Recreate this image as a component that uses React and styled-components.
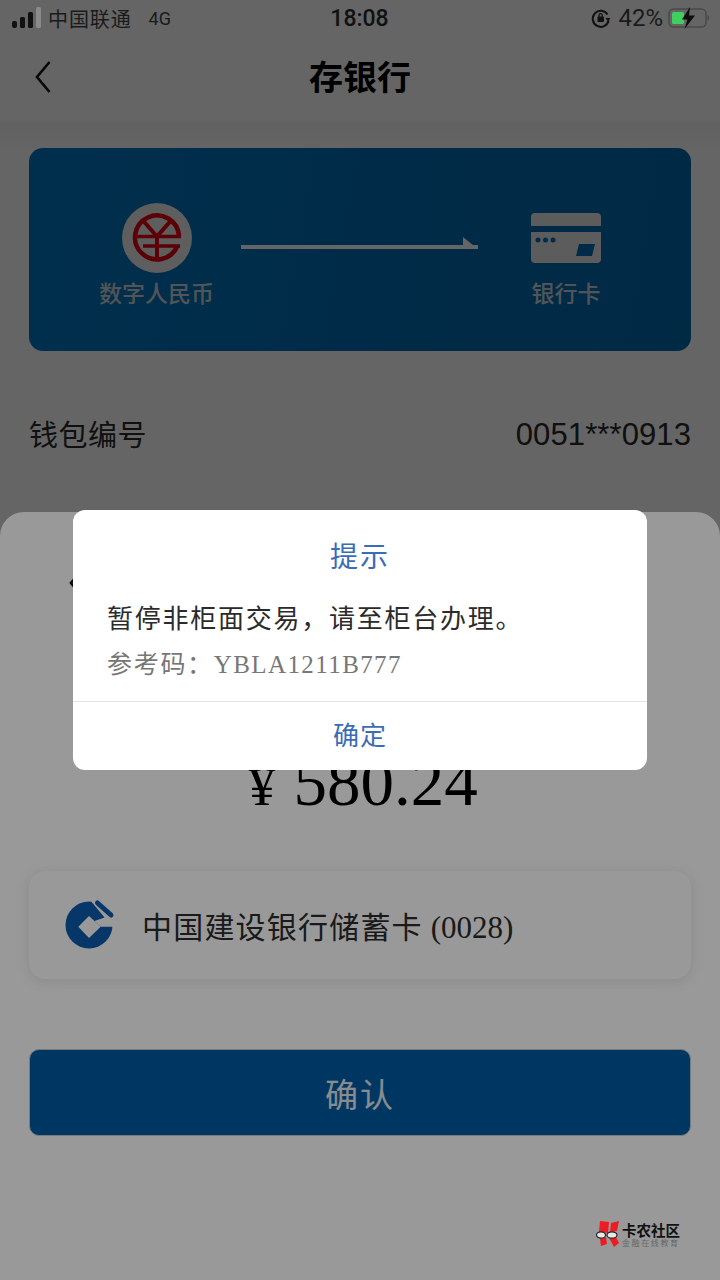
import styled, { createGlobalStyle } from "styled-components";

const cjk = `"Noto Sans CJK SC", "Noto Sans", sans-serif`;
const serif = `"Liberation Serif", "Noto Sans CJK SC", serif`;

const GlobalStyle = createGlobalStyle`
  html, body {
    margin: 0;
    padding: 0;
    background: #fff;
  }
  * {
    box-sizing: border-box;
  }
`;

const Screen = styled.div`
  position: relative;
  width: 720px;
  height: 1280px;
  overflow: hidden;
  background: #fff;
  font-family: ${cjk};
`;

const Page = styled.div`
  display: flex;
  flex-direction: column;
  height: 100%;
  padding-top: 36px;
  background: linear-gradient(#fff 0, #fff 120px, #f7f7f7 124px, #fff 150px);
`;

const StatusBar = styled.div`
  position: absolute;
  top: 0;
  left: 0;
  right: 0;
  display: flex;
  align-items: center;
  justify-content: space-between;
  height: 36px;
  padding: 0 10px 0 12px;
  font-family: "Roboto", ${cjk};
  font-size: 22px;
  color: #1a1a1a;
`;

const StatusSide = styled.div`
  display: flex;
  align-items: center;
  gap: ${(p) => p.$gap || 6}px;
  width: ${(p) => (p.$right ? 273 : 270)}px;
  justify-content: ${(p) => (p.$right ? "flex-end" : "flex-start")};
`;

const Carrier = styled.span`
  margin-right: 11px;
  font-family: ${cjk};
  font-size: 20px;
  letter-spacing: 0.9px;
`;

const NetworkType = styled.span`
  font-size: 18px;
`;

const Clock = styled.span`
  font-size: 23px;
  font-weight: 500;
  color: #111;
`;

const Battery = styled.span`
  font-size: 24px;
  margin-left: 2px;
`;

const NavBar = styled.div`
  position: relative;
  display: flex;
  align-items: center;
  justify-content: center;
  height: 84px;
  margin-bottom: 28px;
`;

const BackButton = styled.div`
  position: absolute;
  left: 34px;
  top: 24px;
  line-height: 0;
`;

const Title = styled.h1`
  margin: 0 0 6px;
  font-size: 34px;
  font-weight: 700;
  color: #000;
`;

const Banner = styled.div`
  display: flex;
  align-items: flex-start;
  justify-content: space-between;
  height: 203px;
  margin: 0 29px;
  padding: 55px 90px 0 70px;
  border-radius: 14px;
  background: linear-gradient(100deg, #0078c4 0%, #006fb6 55%, #0069ae 100%);
`;

const BannerItem = styled.div`
  display: flex;
  flex-direction: column;
  align-items: center;
  gap: 1px;
`;

const IconSlot = styled.div`
  display: flex;
  align-items: center;
  height: 70px;
`;

const BannerLabel = styled.span`
  font-size: 23px;
  line-height: 36px;
  font-weight: 500;
  white-space: nowrap;
  color: #cfd8df;
`;

const TransferArrow = styled.div`
  position: relative;
  flex: 1;
  height: 4px;
  margin: 42px 53px 0 27px;
  background: #fff;

  &::after {
    content: "";
    position: absolute;
    right: 0;
    bottom: 0;
    border-left: 15px solid #fff;
    border-top: 12px solid transparent;
  }
`;

const InfoRow = styled.div`
  display: flex;
  align-items: flex-start;
  justify-content: space-between;
  margin: 62px 29px 0;
  font-size: 29px;
  line-height: 40px;
  letter-spacing: 0.5px;
  color: #2a2a2a;
`;

const WalletNumber = styled.span`
  padding-top: 2px;
  font-family: "Liberation Sans", sans-serif;
  font-size: 31px;
  letter-spacing: 0.1px;
`;

const Scrim = styled.div`
  position: absolute;
  inset: 0;
  background: rgba(0, 0, 0, ${(p) => p.$alpha});
`;

const Sheet = styled.div`
  position: absolute;
  left: 0;
  right: 0;
  top: 512px;
  bottom: 0;
  display: flex;
  flex-direction: column;
  padding: 0 29px;
  border-radius: 24px 24px 0 0;
  background: #fff;
`;

const SheetHeader = styled.div`
  height: 100px;
  padding: 54px 0 0 39px;
  line-height: 0;
`;

const Amount = styled.div`
  margin-top: 132px;
  padding-left: 6px;
  font-family: ${serif};
  font-size: 67px;
  line-height: 76px;
  text-align: center;
  color: #000;
`;

const Yen = styled.span`
  margin-right: 18px;
  font-size: 54px;
`;

const BankCard = styled.div`
  display: flex;
  align-items: center;
  gap: 29px;
  height: 108px;
  margin-top: 46px;
  padding-left: 36px;
  border-radius: 16px;
  background: #fff;
  box-shadow: 0 2px 14px rgba(0, 0, 0, 0.1);
`;

const BankName = styled.span`
  font-size: 30px;
  letter-spacing: 1.2px;
  color: #2c2c2c;
`;

const CardTail = styled.span`
  font-family: ${serif};
  font-size: 31px;
  letter-spacing: 0;
`;

const ConfirmButton = styled.div`
  display: flex;
  align-items: center;
  justify-content: center;
  height: 87px;
  margin-top: 70px;
  border: 1px solid #c4ccd4;
  border-radius: 10px;
  background: #005da3;
  font-size: 33px;
  letter-spacing: 2px;
  color: #e4e9ee;
`;

const Watermark = styled.div`
  position: absolute;
  right: 40px;
  bottom: 33px;
  display: flex;
  align-items: center;
  gap: 1px;
`;

const WatermarkText = styled.div`
  display: flex;
  flex-direction: column;
`;

const WatermarkName = styled.span`
  font-size: 14.5px;
  line-height: 17px;
  font-weight: 700;
  letter-spacing: 0;
  color: #111;
`;

const WatermarkSub = styled.span`
  font-size: 8px;
  line-height: 9px;
  letter-spacing: 1.6px;
  color: #666;
`;

const Dialog = styled.div`
  position: absolute;
  left: 73px;
  top: 510px;
  display: flex;
  flex-direction: column;
  width: 574px;
  height: 260px;
  border-radius: 12px;
  background: #fff;
`;

const DialogTitle = styled.div`
  margin-top: 25px;
  font-size: 28px;
  line-height: 40px;
  text-align: center;
  letter-spacing: 2px;
  color: #3b6cb7;
`;

const DialogBody = styled.div`
  flex: 1;
  padding: 20px 34px 0;
`;

const Message = styled.div`
  font-size: 26px;
  line-height: 44px;
  letter-spacing: 1.75px;
  white-space: nowrap;
  color: #2b2b2b;
`;

const RefCode = styled.div`
  font-size: 25px;
  line-height: 46px;
  letter-spacing: 1.7px;
  white-space: nowrap;
  color: #777;
`;

const RefValue = styled.span`
  font-family: ${serif};
  letter-spacing: 1.4px;
`;

const DialogAction = styled.div`
  height: 69px;
  border-top: 1px solid #e4e4e4;
  font-size: 26px;
  line-height: 64px;
  text-align: center;
  letter-spacing: 1px;
  color: #3b6cb7;
`;

const SignalIcon = () => (
  <svg width="30" height="24" viewBox="0 0 30 24">
    <rect x="0" y="15" width="5" height="7" rx="2" fill="#111" />
    <rect x="8" y="11" width="5" height="11" rx="1.5" fill="#111" />
    <rect x="16" y="6" width="5" height="16" rx="1.5" fill="#111" />
    <rect x="24" y="1" width="5" height="21" rx="1.5" fill="#8a8a8a" />
  </svg>
);

const RotationLockIcon = () => (
  <svg width="20" height="20" viewBox="0 0 20 20">
    <path d="M16.5 6.5A8 8 0 1 0 17.6 12.5" fill="none" stroke="#111" strokeWidth="2" />
    <path d="M14.5 10h5l-2.500 3.400z" fill="#111" />
    <rect x="6.500" y="8.500" width="6.500" height="5.500" rx="1" fill="#111" />
    <path d="M8 9V7.200a1.600 1.600 0 0 1 3.200 0V9" fill="none" stroke="#111" strokeWidth="1.300" />
  </svg>
);

const BatteryIcon = () => (
  <svg width="42" height="22" viewBox="0 0 42 22">
    <rect x="1" y="2" width="37" height="18" rx="4.500" fill="none" stroke="#4a4a4a" strokeWidth="1.500" />
    <rect x="4" y="5" width="12" height="12" rx="1.500" fill="#3fce5f" />
    <path d="M39.500 8c2 .6 2 5.400 0 6z" fill="#4a4a4a" />
    <path d="M22 0 14 12.500h5.500L16.500 22 27 8.500h-6z" fill="#0c0c0c" />
  </svg>
);

const ChevronLeft = () => (
  <svg width="18" height="34" viewBox="0 0 18 34">
    <path d="M15.500 2 3 17l12.500 15" fill="none" stroke="#111" strokeWidth="2.600" />
  </svg>
);

const DigitalRmbIcon = () => (
  <svg width="70" height="70" viewBox="0 0 70 70">
    <circle cx="35" cy="35" r="35" fill="#eeeeee" />
    <g fill="none" stroke="#e60012">
      <path d="M57 33A22 22 0 1 0 55.300 43" strokeWidth="4.500" />
      <path d="M21 17.500 35 33.500l14-16" strokeWidth="4" />
      <path d="M35 33.500V56" strokeWidth="4" />
      <path d="M14 33.500h45M21 43h37" strokeWidth="3.500" />
    </g>
  </svg>
);

const BankCardIcon = () => (
  <svg width="70" height="50" viewBox="0 0 70 50">
    <path d="M4 0h62a4 4 0 0 1 4 4v9H0V4a4 4 0 0 1 4-4z" fill="#e8e8e8" />
    <path d="M0 19h70v27a4 4 0 0 1-4 4H4a4 4 0 0 1-4-4z" fill="#e8e8e8" />
    <circle cx="7" cy="27" r="2.500" fill="#0070b8" />
    <circle cx="14.500" cy="27" r="2.500" fill="#0070b8" />
    <circle cx="22" cy="27" r="2.500" fill="#0070b8" />
    <path d="M48 31h16l-3 12H45z" fill="#0070b8" />
  </svg>
);

const CcbLogo = () => (
  <svg width="48" height="48" viewBox="0 0 48 48" style={{ overflow: "visible" }}>
    <circle cx="24" cy="24" r="23.500" fill="#0a5cad" />
    <path d="M24 15 35.700 25.700 24 37 13.300 25.700z" fill="#fff" />
    <path d="M25 -1H50V25.700H35.700L29.500 20 39.500 16.500z" fill="#fff" />
    <path d="M32.500 2 46 14" stroke="#0a5cad" strokeWidth="5" strokeLinecap="round" fill="none" />
  </svg>
);

const KaNongLogo = () => (
  <svg width="26" height="27" viewBox="0 0 26 27">
    <path d="M5 1 14 2 13 13 4 12z" fill="#ec1c24" />
    <path d="M16 3 24 1 22 11 15 12z" fill="#ec1c24" />
    <path d="M5 19 11 17 12 24 6 26z" fill="#ec1c24" />
    <path d="M13 16 21 17 24 23 19 27z" fill="#ec1c24" />
    <ellipse cx="6" cy="15" rx="4.500" ry="3.200" fill="#e8e8e8" stroke="#222" strokeWidth="1.200" />
    <ellipse cx="17" cy="15" rx="5" ry="3.200" fill="#e8e8e8" stroke="#222" strokeWidth="1.200" />
  </svg>
);

const App = () => {
  return (
    <Screen>
      <GlobalStyle />
      <Page>
        <NavBar>
          <BackButton>
            <ChevronLeft />
          </BackButton>
          <Title>存银行</Title>
        </NavBar>
        <Banner>
          <BannerItem>
            <IconSlot>
              <DigitalRmbIcon />
            </IconSlot>
            <BannerLabel>数字人民币</BannerLabel>
          </BannerItem>
          <TransferArrow />
          <BannerItem>
            <IconSlot>
              <BankCardIcon />
            </IconSlot>
            <BannerLabel>银行卡</BannerLabel>
          </BannerItem>
        </Banner>
        <InfoRow>
          <span>钱包编号</span>
          <WalletNumber>0051***0913</WalletNumber>
        </InfoRow>
      </Page>
      <Scrim $alpha={0.34} />
      <Sheet>
        <SheetHeader>
          <ChevronLeft />
        </SheetHeader>
        <Amount>
          <Yen>¥</Yen>580.24
        </Amount>
        <BankCard>
          <CcbLogo />
          <BankName>
            中国建设银行储蓄卡 <CardTail>(0028)</CardTail>
          </BankName>
        </BankCard>
        <ConfirmButton>确认</ConfirmButton>
      </Sheet>
      <Scrim $alpha={0.4} />
      <StatusBar>
        <StatusSide>
          <SignalIcon />
          <Carrier>中国联通</Carrier>
          <NetworkType>4G</NetworkType>
        </StatusSide>
        <Clock>18:08</Clock>
        <StatusSide $right $gap={5}>
          <RotationLockIcon />
          <Battery>42%</Battery>
          <BatteryIcon />
        </StatusSide>
      </StatusBar>
      <Watermark>
        <KaNongLogo />
        <WatermarkText>
          <WatermarkName>卡农社区</WatermarkName>
          <WatermarkSub>金融在线教育</WatermarkSub>
        </WatermarkText>
      </Watermark>
      <Dialog>
        <DialogTitle>提示</DialogTitle>
        <DialogBody>
          <Message>暂停非柜面交易，请至柜台办理。</Message>
          <RefCode>
            参考码：<RefValue>YBLA1211B777</RefValue>
          </RefCode>
        </DialogBody>
        <DialogAction>确定</DialogAction>
      </Dialog>
    </Screen>
  );
};

export default App;
